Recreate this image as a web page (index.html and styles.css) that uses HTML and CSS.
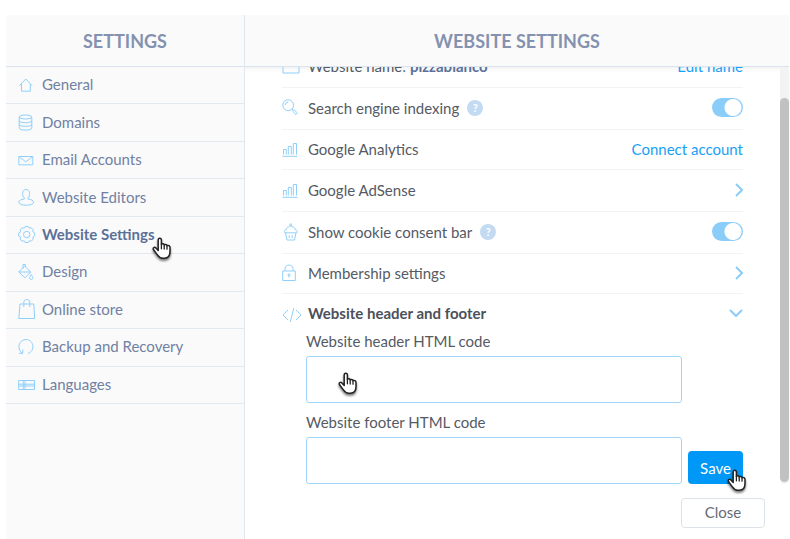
FILE: index.html
```html
<!DOCTYPE html>
<html lang="en">
<head>
  <meta charset="UTF-8" />
  <meta name="viewport" content="width=device-width, initial-scale=1.0"/>
  <title>Website Settings</title>
  <link rel="stylesheet" href="styles.css">
</head>
<body>
  <!-- shared hand cursor -->
  <svg class="sprite" aria-hidden="true">
    <symbol id="hand" viewBox="0 0 20 24">
      <path d="M6.2 13.5V3.2C6.2 .6 9.4 .6 9.4 3.2V7.2C10.4 6.3 12 6.6 12.2 7.8C13.3 7 14.8 7.4 15 8.7C16.4 8 18 8.8 18 10.5V14.5C18 18.5 16.2 21.2 12.4 21.2H10.8C8 21.2 6.6 19.6 5.2 17.6L1.6 12.8C.4 10.9 2.6 9.6 3.9 10.9Z" fill="#fff" stroke="#222" stroke-width="1.5" stroke-linejoin="round"/>
      <path d="M9.4 7V11.8M12.2 7.8V12M15 8.7V12.2" fill="none" stroke="#222" stroke-width="1.3" stroke-linecap="round"/>
    </symbol>
  </svg>

  <div class="panel">
    <aside class="sidebar">
      <h2 class="title">SETTINGS</h2>
      <nav class="menu">
        <a href="#general"><svg class="icon" viewBox="0 0 18 18"><path d="M1.5 10.5L7.8 4L14 10.5M3.5 9V16.2H12.3V9"/></svg>General</a>
        <a href="#domains"><svg class="icon" viewBox="0 0 18 18"><ellipse cx="7.5" cy="4" rx="6.3" ry="2"/><path d="M1.2 4V15C1.2 17.8 13.8 17.8 13.8 15V4M1.2 7.8C1.2 10.4 13.8 10.4 13.8 7.8M1.2 11.4C1.2 14 13.8 14 13.8 11.4"/></svg>Domains</a>
        <a href="#email"><svg class="icon" viewBox="0 0 18 18"><path d="M.8 6.5H14.8V14.8H.8ZM.8 6.5L7.8 11.8L14.8 6.5"/></svg>Email Accounts</a>
        <a href="#editors"><svg class="icon" viewBox="0 0 18 18"><path d="M6.3 11V9.8C5 8.8 4.6 7.4 4.6 5.4C4.6 .2 11.6 .2 11.6 5.4C11.6 7.4 11.2 8.8 9.9 9.8V11C13.3 11.4 15.6 12.6 15.6 14.2C15.6 18.2 .8 18.2 .8 14.2C.8 12.6 3 11.4 6.3 11"/></svg>Website Editors</a>
        <a href="#settings" class="active"><svg class="icon" viewBox="0 0 18 18"><circle cx="8.7" cy="9.5" r="3.2"/><path d="M7.2 1.5H10.2L11.2 3.2L13.3 2.8L15.2 4.8L14.8 6.8L16.7 8V11L14.8 12.2L15.2 14.2L13.3 16.2L11.2 15.8L10.2 17.5H7.2L6.2 15.8L4.1 16.2L2.2 14.2L2.6 12.2L.7 11V8L2.6 6.8L2.2 4.8L4.1 2.8L6.2 3.2Z" stroke-linejoin="round"/></svg>Website Settings
          <svg class="cursor cursor-menu" aria-hidden="true"><use href="#hand"/></svg></a>
        <a href="#design"><svg class="icon" viewBox="0 0 18 18"><path d="M5 6.5V2.5H7.3V5M6.5 4L12.8 10L7 15.8L.8 10L6.5 4.2M.8 10H12.8M13.2 12.5C12 14.5 11.6 15.2 11.6 16C11.6 18 14.9 18 14.9 16C14.9 15.2 14.4 14.5 13.2 12.5Z"/></svg>Design</a>
        <a href="#store"><svg class="icon tall" viewBox="0 0 18 22"><path d="M2 6H15.8L16.7 20.5H.8ZM5.8 9V4.2C5.8 .7 11.8 .7 11.8 4.2V9"/></svg>Online store</a>
        <a href="#backup"><svg class="icon" viewBox="0 0 18 18"><path d="M10 16.5C17.5 14 16 3 8.2 2.5C.8 2.5 -1.6 11.5 4 16M4.8 12.5V16.3H1"/></svg>Backup and Recovery</a>
        <a href="#languages"><svg class="icon" viewBox="0 0 18 18"><path d="M.7 5.5H16.5V14.5H.7ZM.7 9.2H16.5M.7 11H16.5M5.2 5.5V14.5M7 5.5V14.5"/></svg>Languages</a>
      </nav>
    </aside>

    <main class="content">
      <h1 class="title">WEBSITE SETTINGS</h1>
      <div class="scroller">
        <div class="settings">
          <div class="row">
            <svg class="icon" viewBox="0 0 18 18"><path d="M1 2.5H17V16H1Z"/></svg>
            <span>Website name<span class="colon">:</span> <strong>pizzabianco</strong></span>
            <a class="action" href="#name">Edit name</a>
          </div>
          <div class="row">
            <svg class="icon" viewBox="0 0 18 18"><circle cx="6.2" cy="6.2" r="5.4"/><path d="M3.3 6C3.3 4.4 4.5 3.1 6.2 3.1M10 10L11.2 11.2M10.6 12.2L12 10.7L15.4 14L14 15.5Z"/></svg>
            <label for="indexing">Search engine indexing</label>
            <button class="help" type="button" aria-label="Help">?</button>
            <input class="toggle action" type="checkbox" id="indexing" checked>
          </div>
          <div class="row short">
            <svg class="icon" viewBox="0 0 18 18"><path d="M.5 16.3H15.5M1.5 14.5V9.5H4.3V14.5M6.3 14.5V6.5H9.3V14.5M11.3 14.5V3.5H14.5V14.5"/></svg>
            <span>Google Analytics</span>
            <a class="action" href="#analytics">Connect account</a>
          </div>
          <div class="row">
            <svg class="icon" viewBox="0 0 18 18"><path d="M.5 16.3H15.5M1.5 14.5V9.5H4.3V14.5M6.3 14.5V6.5H9.3V14.5M11.3 14.5V3.5H14.5V14.5"/></svg>
            <span>Google AdSense</span>
            <button class="chevron action" type="button" aria-label="Open Google AdSense"><svg viewBox="0 0 8 14"><path d="M1 1L7 7L1 13"/></svg></button>
          </div>
          <div class="row">
            <svg class="icon" viewBox="0 0 18 18"><path d="M3.5 9.8L5 17H12.5L14 9.8M2.8 9.8H14.7C16 8 14.5 6.8 13.3 6.8C13.3 5 12 4 10.8 4C10.3 3.2 9.6 3 8.7 3C7.8 3 7.1 3.2 6.6 4C5.4 4 4.2 5 4.2 6.8C3 6.8 1.5 8 2.8 9.8M7.2 12.2V15M10.2 12.2V15"/><circle cx="8.7" cy="1.8" r="1"/></svg>
            <label for="cookies">Show cookie consent bar</label>
            <button class="help" type="button" aria-label="Help">?</button>
            <input class="toggle action" type="checkbox" id="cookies" checked>
          </div>
          <div class="row short">
            <svg class="icon" viewBox="0 0 18 18"><path d="M.7 7H13.3V16.5H.7ZM3 7V4.8C3 -.2 11 -.2 11 4.8V7M7 11V13.5"/><circle cx="7" cy="10.8" r="1"/></svg>
            <span>Membership settings</span>
            <button class="chevron action" type="button" aria-label="Open membership settings"><svg viewBox="0 0 8 14"><path d="M1 1L7 7L1 13"/></svg></button>
          </div>
          <div class="row last">
            <svg class="icon code" viewBox="0 0 20 18"><path d="M6 6L1 11L6 16M14 6L19 11L14 16M11.8 4L8.3 18"/></svg>
            <strong>Website header and footer</strong>
            <button class="chevron down action" type="button" aria-label="Collapse"><svg viewBox="0 0 14 8"><path d="M1 1L7 7L13 1"/></svg></button>
          </div>
          <form class="code-form">
            <div class="field">
              <label for="header-code">Website header HTML code</label>
              <textarea id="header-code"></textarea>
              <svg class="cursor cursor-field" aria-hidden="true"><use href="#hand"/></svg>
            </div>
            <div class="field">
              <label for="footer-code">Website footer HTML code</label>
              <textarea id="footer-code"></textarea>
            </div>
            <button class="save" type="button">Save
              <svg class="cursor cursor-save" aria-hidden="true"><use href="#hand"/></svg></button>
          </form>
        </div>
        <div class="track"><div class="thumb"></div></div>
      </div>
      <div class="footer">
        <button class="close" type="button">Close</button>
      </div>
    </main>
  </div>
</body>
</html>
```
FILE: styles.css
```css
* {
  box-sizing: border-box;
}

body {
  margin: 0;
  padding: 15px 1px 0 6px;
  min-height: 100vh;
  display: flex;
  font-family: Lato, "Liberation Sans", sans-serif;
  font-size: 15px;
  line-height: 20px;
  color: #555a64;
  background-color: #fff;
}

button,
textarea {
  font: inherit;
}

.sprite {
  position: absolute;
  width: 0;
  height: 0;
}

.panel {
  flex: 1;
  display: flex;
}

.sidebar {
  width: 239px;
  flex-shrink: 0;
  background-color: #fafafa;
  border-right: 1px solid #dfe7f0;
}

.content {
  flex: 1;
  min-width: 0;
}

.title {
  margin: 0;
  height: 52px;
  line-height: 52px;
  font-size: 18px;
  font-weight: 700;
  text-align: center;
  color: #8492b0;
  background-color: #fafafa;
  border-bottom: 1px solid #d9e4ef;
}

/* sidebar menu */
.menu {
  display: grid;
  grid-auto-rows: 1fr;
  min-height: 337px;
}

.menu a {
  position: relative;
  display: flex;
  align-items: center;
  gap: 6px;
  padding: 0 0 2px 12px;
  color: #7081a3;
  text-decoration: none;
  border-bottom: 1px solid #e1e8ef;
}

.menu .active {
  font-weight: 700;
  color: #5b7198;
}

.icon {
  width: 18px;
  height: 18px;
  flex-shrink: 0;
  fill: none;
  stroke: #8fd0fb;
  stroke-width: 1;
}

.icon.tall {
  height: 22px;
}

.icon.code {
  width: 20px;
  margin-right: -2px;
}

/* scroll area, clipped at the top only */
.scroller {
  display: flex;
  clip-path: inset(0 0 -20px 0);
  box-shadow: inset 0 6px 6px -6px rgba(0, 0, 0, 0.1);
}

.settings {
  flex: 1;
  margin-top: -21px;
  padding: 0 37px;
}

.row {
  display: flex;
  align-items: center;
  gap: 8px;
  height: 42px;
  padding-bottom: 2px;
  border-bottom: 1px solid #f1f3f5;
}

.row.short {
  height: 40px;
}

.row.last {
  height: 37px;
  padding-bottom: 0;
  border-bottom: none;
}

.row strong {
  color: #4b515b;
}

.row span strong {
  color: #5b7198;
}

.colon {
  color: #5b7198;
}

.action {
  margin: 0 0 0 auto;
}

a.action {
  color: #1a9ff5;
  text-decoration: none;
}

.help {
  width: 16px;
  height: 16px;
  padding: 0;
  border: none;
  border-radius: 50%;
  font-size: 11px;
  font-weight: 700;
  line-height: 16px;
  color: #fff;
  background-color: #c3daf3;
}

.toggle {
  appearance: none;
  width: 31px;
  height: 19px;
  border-radius: 10px;
  background: radial-gradient(circle at 21px 50%, #fff 8px, #8bcdf9 9px);
}

.chevron {
  display: flex;
  padding: 0;
  border: none;
  background: none;
}

.chevron svg {
  width: 8px;
  height: 14px;
  fill: none;
  stroke: #8bcdf9;
  stroke-width: 2;
}

.chevron.down svg {
  width: 14px;
  height: 8px;
}

/* header and footer code */
.code-form {
  display: grid;
  grid-template-columns: 1fr 55px;
  align-items: end;
  gap: 9px 6px;
  padding-left: 24px;
}

.field {
  position: relative;
  grid-column: 1;
}

.field label {
  display: block;
  margin-bottom: 5px;
}

.field textarea {
  display: block;
  width: 100%;
  height: 47px;
  border: 1px solid #a0d6fb;
  border-radius: 3px;
  resize: none;
}

.save {
  position: relative;
  height: 33px;
  padding: 0;
  border: none;
  border-radius: 4px;
  color: #fff;
  background-color: #0098f7;
}

.track {
  width: 9px;
  border-radius: 5px;
  background-color: #f3f3f3;
}

.thumb {
  height: calc(100% - 33px);
  margin-top: 31px;
  border-radius: 5px;
  background-color: #c1c1c1;
}

.footer {
  display: flex;
  justify-content: flex-end;
  padding: 14px 24px 11px 0;
}

.close {
  width: 84px;
  height: 30px;
  padding: 0 0 2px;
  color: #666b75;
  background-color: #fff;
  border: 1px solid #dde2ea;
  border-radius: 4px;
}

/* hand cursors over the page */
.cursor {
  position: absolute;
  width: 20px;
  height: 24px;
  filter: drop-shadow(0 2px 1px rgba(0, 0, 0, 0.5));
}

.cursor-menu {
  left: 146px;
  top: 20px;
}

.cursor-field {
  left: 32px;
  top: 41px;
}

.cursor-save {
  left: 39px;
  top: 18px;
}
```
